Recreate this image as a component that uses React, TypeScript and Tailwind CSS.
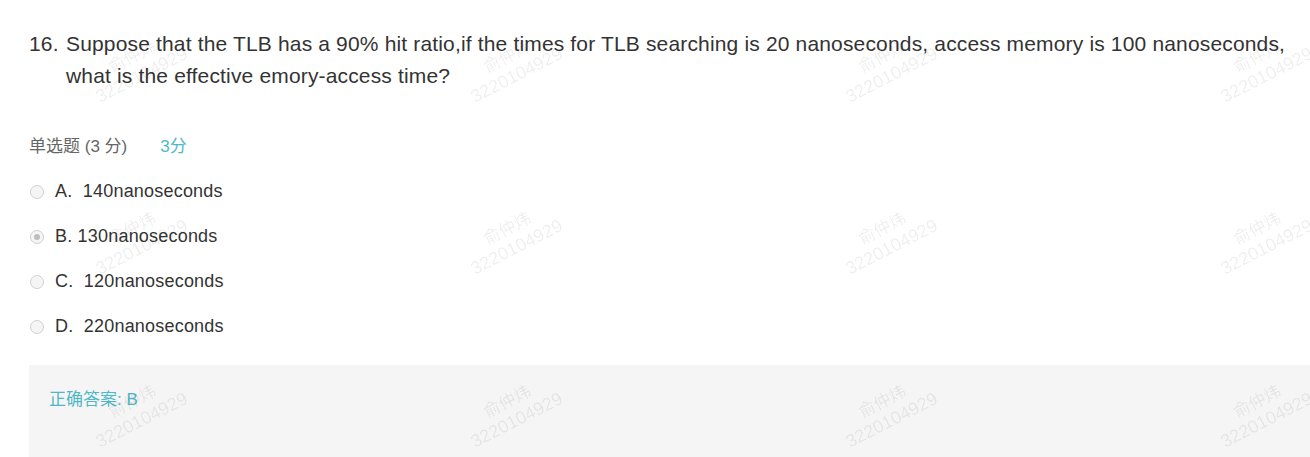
const options = [
  { key: "A", label: "A.\u00a0 140nanoseconds", checked: false },
  { key: "B", label: "B. 130nanoseconds", checked: true },
  { key: "C", label: "C.\u00a0 120nanoseconds", checked: false },
  { key: "D", label: "D.\u00a0 220nanoseconds", checked: false },
];

const markCols = [137, 512, 887, 1262];
const markRows = [66, 238, 411];

const Radio = ({ checked }: { checked: boolean }) => (
  <span className="flex h-[14px] w-[14px] items-center justify-center rounded-full border border-[#d0d0d0] bg-[#f5f5f5]">
    {checked && <span className="h-[6px] w-[6px] rounded-full bg-[#bdbdbd]" />}
  </span>
);

const Watermark = ({ x, y }: { x: number; y: number }) => (
  <div
    className="absolute flex w-[140px] -translate-x-1/2 -translate-y-1/2 -rotate-[27deg] flex-col items-center leading-[20px] text-[rgba(0,0,0,0.08)]"
    style={{ left: x, top: y }}
  >
    <span className="text-[17px]">俞仲炜</span>
    <span className="text-[18px]">3220104929</span>
  </div>
);

export default function App() {
  return (
    <div
      className="relative h-[457px] w-[1310px] overflow-hidden bg-white"
      style={{ fontFamily: '"Liberation Sans", Arial, "Noto Sans CJK SC", sans-serif' }}
    >
      <div className="pl-[29px] pt-[28px]">
        <div className="flex text-[21px] leading-[32px] tracking-[0.16px] text-[#333333]">
          <span className="w-[37px] shrink-0">16.</span>
          <p className="pr-[4px]">
            Suppose that the TLB has a 90% hit ratio,if the times for TLB searching is 20
            nanoseconds, access memory is 100 nanoseconds, what is the effective emory-access
            time?
          </p>
        </div>

        <div className="mt-[43px] flex text-[17px] leading-[24px]">
          <span className="text-[#666666]">单选题 (3 分)</span>
          <span className="ml-[33px] text-[#4fb8c6]">3分</span>
        </div>

        <div className="mt-[10px] flex flex-col">
          {options.map((opt) => (
            <div key={opt.key} className="flex h-[45px] items-center">
              <span className="ml-[1px] mr-[11px]">
                <Radio checked={opt.checked} />
              </span>
              <span className="text-[18px] tracking-[0.2px] text-[#333333]">{opt.label}</span>
            </div>
          ))}
        </div>

        <div className="mt-[16px] h-[120px] bg-[#f5f5f5] px-[20px] pt-[23px]">
          <span className="text-[17px] leading-[24px] text-[#4fb8c6]">正确答案: B</span>
        </div>
      </div>

      <div className="pointer-events-none absolute inset-0">
        {markRows.map((y) =>
          markCols.map((x) => <Watermark key={`${x}-${y}`} x={x} y={y} />)
        )}
      </div>
    </div>
  );
}
